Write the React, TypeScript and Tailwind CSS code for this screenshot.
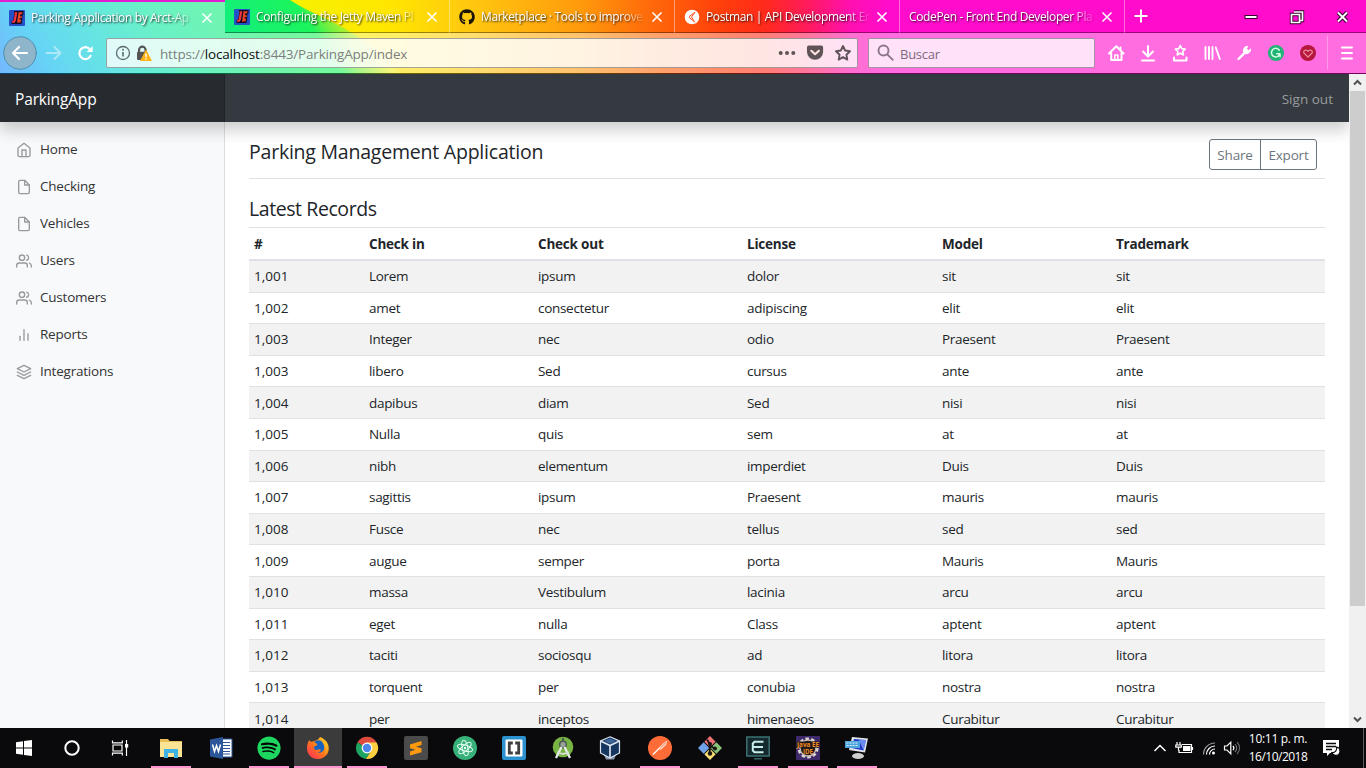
import type { ReactNode } from "react";
import { FiHome, FiFile, FiUsers, FiBarChart2, FiLayers } from "react-icons/fi";
import { FaGithub, FaSpotify } from "react-icons/fa";
import type { IconType } from "react-icons";

const NAV: [string, IconType][] = [
  ["Home", FiHome],
  ["Checking", FiFile],
  ["Vehicles", FiFile],
  ["Users", FiUsers],
  ["Customers", FiUsers],
  ["Reports", FiBarChart2],
  ["Integrations", FiLayers],
];

const HEAD = ["#", "Check in", "Check out", "License", "Model", "Trademark"];

const RECORDS: string[][] = [
  ["1,001", "Lorem", "ipsum", "dolor", "sit", "sit"],
  ["1,002", "amet", "consectetur", "adipiscing", "elit", "elit"],
  ["1,003", "Integer", "nec", "odio", "Praesent", "Praesent"],
  ["1,003", "libero", "Sed", "cursus", "ante", "ante"],
  ["1,004", "dapibus", "diam", "Sed", "nisi", "nisi"],
  ["1,005", "Nulla", "quis", "sem", "at", "at"],
  ["1,006", "nibh", "elementum", "imperdiet", "Duis", "Duis"],
  ["1,007", "sagittis", "ipsum", "Praesent", "mauris", "mauris"],
  ["1,008", "Fusce", "nec", "tellus", "sed", "sed"],
  ["1,009", "augue", "semper", "porta", "Mauris", "Mauris"],
  ["1,010", "massa", "Vestibulum", "lacinia", "arcu", "arcu"],
  ["1,011", "eget", "nulla", "Class", "aptent", "aptent"],
  ["1,012", "taciti", "sociosqu", "ad", "litora", "litora"],
  ["1,013", "torquent", "per", "conubia", "nostra", "nostra"],
  ["1,014", "per", "inceptos", "himenaeos", "Curabitur", "Curabitur"],
];

/* ---------- Tab strip ---------- */

function JettyIcon() {
  return (
    <svg width="16" height="16" viewBox="0 0 16 16">
      <rect width="16" height="16" rx="1" fill="#2450c8" />
      <path d="M5 1h9.500v3.500l-1 .5-.3 5-.7 4H2.500v-3l1.500-.5 1-5z" fill="#160c22" />
      <path d="M5.500 2.300h2.800L6.900 10.500 5.800 12.700H3l.3-2h1.200L5.700 4.500z" fill="#f5333f" />
      <path d="M9.600 2.300h3.900l-.3 2h-1.900l-.3 1.900h1.900l-.3 1.900h-1.900l-.2 1.500h1.600l-.6 2.900H8z" fill="#f04426" />
    </svg>
  );
}

function PostmanTabIcon() {
  return (
    <svg width="16" height="16" viewBox="0 0 16 16">
      <circle cx="8" cy="8" r="7.300" fill="#fff" />
      <path d="M11 3.200 4.800 7.800M5 8.300l5.500 4.500M11 3.200 7.500 8l3 4.800" fill="none" stroke="#ff4a1c" strokeWidth="1" />
    </svg>
  );
}

function Close() {
  return (
    <svg width="12" height="12" viewBox="0 0 12 12" className="shrink-0">
      <path d="M1.500 1.500l9 9M10.500 1.500l-9 9" stroke="#fff" strokeWidth="1.600" />
    </svg>
  );
}

function Tab({ title, icon, active }: { title: string; icon?: ReactNode; active?: boolean }) {
  return (
    <div
      className={
        "flex h-[33px] w-[225px] shrink-0 items-center pl-[9px] " +
        (active
          ? "border-t-2 border-[#e31bd3] bg-white/40 bg-clip-padding pr-[12px]"
          : "border-r border-b border-r-white/40 border-b-black/40 pt-[2px] pr-[11px]")
      }
    >
      {icon && <span className="mr-[6px] flex w-4 shrink-0">{icon}</span>}
      <span className="mr-[5px] flex-1 overflow-hidden text-[12px] leading-[20px] font-medium tracking-[-0.36px] whitespace-nowrap text-white [mask-image:linear-gradient(90deg,#000_calc(100%-24px),transparent)] [text-shadow:1px_1px_2px_rgba(0,0,0,0.85)]">
        {title}
      </span>
      <Close />
    </div>
  );
}

function WindowButtons() {
  return (
    <svg width="116" height="24" viewBox="0 0 116 24" className="mt-[5px] mr-[9px] ml-auto">
      <rect x="4" y="10.500" width="12" height="3" fill="#fff" stroke="#3b0030" strokeWidth="1" />
      <path d="M53 7h8.500v8.500h-2.500M50.500 9.500h8v8h-8z" fill="none" stroke="#3b0030" strokeWidth="3.400" />
      <path d="M53 7h8.500v8.500h-2.500M50.500 9.500h8v8h-8z" fill="none" stroke="#fff" strokeWidth="1.700" />
      <path d="M97 7.500l9 9M106 7.500l-9 9" stroke="#3b0030" strokeWidth="4" />
      <path d="M97 7.500l9 9M106 7.500l-9 9" stroke="#fff" strokeWidth="2" />
    </svg>
  );
}

/* ---------- Toolbar ---------- */

function NavButtons() {
  return (
    <svg width="106" height="40" viewBox="0 0 106 40" className="shrink-0" fill="none" stroke="#fff" strokeLinecap="round" strokeLinejoin="round">
      <circle cx="20" cy="20" r="16.300" fill="#8fb5cb" stroke="#4f8fab" strokeWidth="1" />
      <path d="M27 20H13.500M19 14l-6 6 6 6" strokeWidth="2.200" />
      <path d="M46.500 20H60M54.500 14l6 6-6 6" strokeWidth="2" opacity=".45" />
      <path d="M91 22.200A6 6 0 1 1 90 16.200" strokeWidth="2.200" strokeLinecap="butt" />
      <path d="M92.700 13v6h-6z" fill="#fff" stroke="none" />
    </svg>
  );
}

function SiteIdentity() {
  return (
    <svg width="46" height="20" viewBox="0 0 46 20" className="shrink-0">
      <circle cx="9" cy="10" r="6.500" fill="none" stroke="#5d6a70" strokeWidth="1.300" />
      <path d="M9 9v4.500" stroke="#5d6a70" strokeWidth="1.600" />
      <circle cx="9" cy="6.700" r="1" fill="#5d6a70" />
      <path d="M25 9V7a3.300 3.300 0 0 1 6.600 0v2" fill="none" stroke="#555" strokeWidth="2.200" />
      <rect x="23" y="8.700" width="10.500" height="8.300" rx="1.200" fill="#555" />
      <path d="M32 7.500l5.300 10H26.700z" fill="#ffb214" stroke="#ffb214" strokeWidth="1" strokeLinejoin="round" />
      <path d="M32 10.500v3.700M32 15.200v1.500" stroke="#fff" strokeWidth="1.400" />
    </svg>
  );
}

function PageActions() {
  return (
    <svg width="79" height="24" viewBox="0 0 79 24" className="ml-auto shrink-0" fill="#5f5358">
      <circle cx="2.700" cy="12" r="2" />
      <circle cx="9" cy="12" r="2" />
      <circle cx="15.300" cy="12" r="2" />
      <path d="M30.800 4.500h12.500a1.800 1.800 0 0 1 1.800 1.800v4.500a8.050 8.050 0 0 1-16.100 0V6.300A1.800 1.800 0 0 1 30.800 4.500z" />
      <path d="M33.300 9.700l3.800 3.600 3.800-3.600" fill="none" stroke="#fde5e2" strokeWidth="2" strokeLinecap="round" strokeLinejoin="round" />
      <path d="M65 5l2.100 4.500 4.900.7-3.600 3.500.9 4.900-4.300-2.400-4.300 2.400.9-4.900-3.600-3.500 4.900-.7z" fill="none" stroke="#5f5358" strokeWidth="1.900" strokeLinejoin="round" />
    </svg>
  );
}

function ToolIcons() {
  return (
    <svg width="271" height="40" viewBox="0 0 271 40" className="shrink-0" fill="none" stroke="#fff" strokeWidth="2" strokeLinecap="round" strokeLinejoin="round">
      <path d="M14 20.500 21.300 13.300 28.500 20.500M16.200 20v7h10.300v-7M25.500 14.500v2" />
      <path d="M19.800 27v-5h3v5" strokeWidth="1.500" />
      <path d="M53 13v10M48 18.500l5 5 5-5M47 27.400h12" />
      <path d="M85.300 12.500l1.500 3.200 3.400.4-2.500 2.400.7 3.400-3.100-1.700-3.100 1.700.7-3.400-2.500-2.400 3.400-.4z" strokeWidth="1.700" />
      <path d="M79 24.500v2.900h12.500v-2.900" />
      <path d="M110.500 14v12M114 14v12M117.500 14v12M120.800 14.500l4 11.500" strokeWidth="1.900" />
      <path d="M143.500 26l7.200-7.200" strokeWidth="2.400" />
      <path d="M155.700 16.300a4.200 4.200 0 0 1-6 4l-1-1a4.200 4.200 0 0 1 4-6l-1.200 2.500 1.800 1.700z" fill="#fff" strokeWidth="1" />
      <circle cx="181" cy="20" r="8" fill="#1fb574" stroke="none" />
      <path d="M184.300 17.200a4.300 4.300 0 1 0 .6 3.600h-3.200M185 21v2.700" stroke="#d8fbe9" strokeWidth="1.500" />
      <circle cx="213" cy="20" r="8" fill="#b5173d" stroke="none" />
      <path d="M213 24l-3.800-3.700c-1.800-2 1.300-4.800 3.800-2 2.500-2.800 5.600 0 3.800 2z" stroke="#ef8a9d" strokeWidth="1.200" />
      <path d="M232.500 3v33" stroke="#ff9bea" strokeWidth="1" />
      <path d="M247 14.500h10M247 20h10M247 25.500h10" strokeWidth="2" />
    </svg>
  );
}

function Browser() {
  return (
    <header className="relative flex h-[74px] shrink-0 flex-col bg-[linear-gradient(90deg,#f8f000_300px,#ffe600_390px,#ffc80f_470px,#ff9a0c_580px,#ff6a0a_650px,#ff3d0c_725px,#ff2a1c_765px,#ff1a60_810px,#ff10b0_850px,#ff0ccd_890px)]">
      <svg width="460" height="74" viewBox="0 0 460 74" className="absolute top-0 left-0">
        <defs>
          <linearGradient id="cool" gradientUnits="userSpaceOnUse" x1="0" y1="74" x2="400" y2="-194">
            <stop offset="0" stopColor="#1888ff" />
            <stop offset=".1" stopColor="#00b8ee" />
            <stop offset=".2" stopColor="#00d2d2" />
            <stop offset=".32" stopColor="#06e8a2" />
            <stop offset=".45" stopColor="#12ee7c" />
            <stop offset=".59" stopColor="#1cf45c" />
            <stop offset=".62" stopColor="#70f040" />
            <stop offset=".68" stopColor="#f4ee20" />
          </linearGradient>
        </defs>
        <path d="M0 0H290C308 12 332 20 352 33C371 43 384 55 400 74H0z" fill="url(#cool)" />
      </svg>
      <div className="relative flex h-[33px] text-white">
        <Tab title="Parking Application by Arct-Ap" icon={<JettyIcon />} active />
        <Tab title="Configuring the Jetty Maven Pl" icon={<JettyIcon />} />
        <Tab title="Marketplace · Tools to improve" icon={<FaGithub size={16} color="#1b1508" />} />
        <Tab title="Postman | API Development En" icon={<PostmanTabIcon />} />
        <Tab title="CodePen - Front End Developer Pla" />
        <div className="flex flex-1 border-b border-black/40">
          <svg width="16" height="16" viewBox="0 0 16 16" className="mt-[8px] ml-[8px]">
            <path d="M8 1.500v13M1.500 8h13" stroke="#fff" strokeWidth="2" />
          </svg>
          <WindowButtons />
        </div>
      </div>
      <div className="relative flex h-[40px] items-center bg-white/40">
        <NavButtons />
        <div className="flex h-[30px] w-[752px] shrink-0 items-center rounded-[2px] border border-black/35 bg-white/80 pl-[7px]">
          <SiteIdentity />
          <span className="mt-[2px] text-[13.5px] tracking-[-0.17px] text-[#7c7f7c]">
            https://<span className="text-[#0c0c0d]">localhost</span>:8443/ParkingApp/index
          </span>
          <PageActions />
        </div>
        <div className="ml-[10px] flex h-[30px] w-[227px] shrink-0 items-center rounded-[2px] border border-black/35 bg-white/80 pl-[8px]">
          <svg width="18" height="18" viewBox="0 0 18 18" fill="none" stroke="#8a7688" strokeWidth="1.900">
            <circle cx="6.500" cy="6.500" r="5" />
            <path d="M10.300 10.300l6 6" />
          </svg>
          <span className="mt-[3px] ml-[5px] text-[13px] tracking-[-0.25px] text-[#7d6a7b]">Buscar</span>
        </div>
        <ToolIcons />
      </div>
      <div className="relative h-px bg-black/55" />
    </header>
  );
}

/* ---------- Web page ---------- */

function Sidebar() {
  return (
    <aside className="w-[225px] shrink-0 border-r border-[#dcdde0] bg-[#f8f9fb] pt-[8px]">
      <nav>
        {NAV.map(([name, Icon]) => (
          <a key={name} className="flex h-[37px] items-center pl-[16px] text-[13.5px] leading-[21px] tracking-[-0.22px] text-[#333]">
            <Icon size={16} strokeWidth={2} className="mt-[2px] mr-[8px] text-[#999]" />
            <span className="mt-[2px]">{name}</span>
          </a>
        ))}
      </nav>
    </aside>
  );
}

function Cells({ row }: { row: string[] }) {
  return (
    <>
      {row.map((c, i) => (
        <span key={i} className={i === 0 ? "pl-[5px] tracking-normal" : "pl-[5px]"}>
          {c}
        </span>
      ))}
    </>
  );
}

function Main() {
  return (
    <main className="flex-1 overflow-hidden pr-[24px] pl-[24px] text-[#212529]">
      <div className="flex h-[57px] items-start justify-between border-b border-[#dee2e6] pt-[17px] pr-[8px]">
        <h1 className="mt-[1px] text-[19.5px] leading-[24px] tracking-[-0.22px]">Parking Management Application</h1>
        <div className="flex h-[31px] rounded-[3px] border border-[#6c757d] text-[13.5px] leading-[21px] tracking-[-0.2px] text-[#6c757d]">
          <span className="w-[51px] border-r border-[#6c757d] pt-[5px] text-center">Share</span>
          <span className="w-[55px] pt-[5px] text-center">Export</span>
        </div>
      </div>
      <h2 className="mt-[17px] h-[31px] pt-[1px] text-[19.5px] leading-[24px] tracking-[-0.42px]">Latest Records</h2>
      <div className="border-t border-[#dee2e6] text-[13.5px] leading-[21px] tracking-[-0.3px]">
        <div className="grid h-[33px] grid-cols-[115px_169px_209px_195px_174px_1fr] items-center border-b-2 border-[#dee2e6] pt-[1px] font-bold tracking-[-0.2px]">
          <Cells row={HEAD} />
        </div>
        {RECORDS.map((r, i) => (
          <div
            key={i}
            className="grid h-[31.6px] grid-cols-[115px_169px_209px_195px_174px_1fr] items-center border-b border-[#dee2e6] pt-[0.8px] odd:bg-white even:bg-[#f2f2f2]"
          >
            <Cells row={r} />
          </div>
        ))}
      </div>
    </main>
  );
}

function Scrollbar() {
  return (
    <div className="flex w-[17px] shrink-0 flex-col items-center bg-[#f0f0f0]">
      <svg width="17" height="17" viewBox="0 0 17 17">
        <path d="M5 10.500l3.500-3.500 3.500 3.500" fill="none" stroke="#505050" strokeWidth="2" />
      </svg>
      <div className="h-[515px] w-[15px] bg-[#cdcdcd]" />
      <svg width="17" height="17" viewBox="0 0 17 17" className="mt-auto">
        <path d="M5 6.500l3.500 3.500 3.500-3.500" fill="none" stroke="#505050" strokeWidth="2" />
      </svg>
    </div>
  );
}

function Page() {
  return (
    <div className="flex h-[654px] bg-white">
      <div className="flex flex-1 flex-col overflow-hidden">
        <div className="relative z-10 flex h-[48px] shrink-0 items-center bg-[#343a40] shadow-[0_8px_16px_rgba(0,0,0,0.2)]">
          <div className="flex h-full w-[225px] items-center border-r border-[#202428] bg-[#272b30] pl-[15px] text-[15.5px] tracking-[-0.15px] text-white">
            <span className="mt-[3px]">ParkingApp</span>
          </div>
          <span className="mt-[2px] mr-[16px] ml-auto text-[13.5px] tracking-[0.02px] text-[#999c9f]">Sign out</span>
        </div>
        <div className="flex min-h-0 flex-1">
          <Sidebar />
          <Main />
        </div>
      </div>
      <Scrollbar />
    </div>
  );
}

/* ---------- Taskbar ---------- */

const I = ({ children }: { children: ReactNode }) => (
  <svg width="24" height="24" viewBox="0 0 24 24">
    {children}
  </svg>
);

const windows = (
  <I>
    <path d="M4 6.200l7-1v6.300H4zM12 5.100l8-1.100v7.500h-8zM4 12.500h7v6.300l-7-1zM12 12.500h8V20l-8-1.100z" fill="#fff" />
  </I>
);
const cortana = (
  <I>
    <circle cx="12" cy="12" r="6.700" fill="none" stroke="#fff" strokeWidth="2" />
  </I>
);
const taskView = (
  <I>
    <path d="M4.500 4.500v2.300h9.800V4.500M4.500 19.500v-2.300h9.800v2.300M5 9h9v6H5zM18.500 4v16" fill="none" stroke="#fff" strokeWidth="1.200" />
    <rect x="17" y="8" width="3.200" height="3.500" fill="#fff" />
  </I>
);
const explorer = (
  <I>
    <path d="M1 3h8l1.500 2H23v16H1z" fill="#e9bd57" />
    <path d="M1 6h22v15H1z" fill="#fde394" />
    <path d="M5 22v-9h14v9h-4v-5H9v5z" fill="#3fb2e5" />
  </I>
);
const word = (
  <I>
    <path d="M12 3h11v18H12z" fill="#fff" stroke="#2b579a" />
    <path d="M14 6.500h7M14 9.500h7M14 12.500h7M14 15.500h7M14 18h7" stroke="#2b579a" strokeWidth="1.200" />
    <path d="M1 3.500 14 1v22L1 20.500z" fill="#2b579a" />
    <path d="M3.500 8.500l2 7 2-6 2 6 2-7" fill="none" stroke="#fff" strokeWidth="1.500" />
  </I>
);
const firefox = (
  <I>
    <defs>
      <linearGradient id="ff" x1="0" y1="1" x2="1" y2="0">
        <stop offset="0" stopColor="#ff2b5e" />
        <stop offset=".5" stopColor="#ff7a18" />
        <stop offset="1" stopColor="#ffe32e" />
      </linearGradient>
    </defs>
    <path d="M14 1c3.500 1.500 7.500 4 8.500 9 1.500 7.500-4 13-10.500 13S1 18.500 1 12c0-4 1-6 2.500-8L5 6C8 4.500 12 5 14 1z" fill="url(#ff)" />
    <circle cx="12.500" cy="10.500" r="6.300" fill="#1562c0" />
    <path d="M4 6.500c3-1 6.500 0 7.500 2.500l-3 1.500c-1.500 2 1 4.500 4 3 1.500-.7 3 .3 2 1.500-1.500 2-4 2.500-6 1.500 3.500 3.500 9.500 1.500 10-3.500.3-3-1.500-6.500-4-9 3 1.500 7 4.500 7.500 8.500-1 7-7 9.500-11 9C5 21 1.500 15 4 6.500z" fill="url(#ff)" />
  </I>
);
const chrome = (
  <I>
    <path d="M12 12 2.400 6.500a11 11 0 0 1 19.200 0z" fill="#dd4b3e" />
    <path d="M12 12 2.400 6.500a11 11 0 0 0 8.600 16.400L16.500 14z" fill="#1da362" />
    <path d="M12 6.500h9.600A11 11 0 0 1 11 23l5.500-9z" fill="#ffcd40" />
    <circle cx="12" cy="12" r="5.400" fill="#fff" />
    <circle cx="12" cy="12" r="4.200" fill="#4b87ee" />
  </I>
);
const sublime = (
  <I>
    <rect width="24" height="24" rx="2" fill="#4b4b4b" />
    <path d="M6 8.500 17.500 5v4L12 10.700l5.500 1.600v3.900L6 19.500v-4l5.500-1.800L6 12.300z" fill="#ff9a0c" />
  </I>
);
const atom = (
  <I>
    <circle cx="12" cy="12" r="12" fill="#37b07a" />
    <g fill="none" stroke="#e7fff3" strokeWidth="1">
      <ellipse cx="12" cy="12" rx="2.800" ry="7.800" transform="rotate(-12 12 12)" />
      <ellipse cx="12" cy="12" rx="2.800" ry="7.800" transform="rotate(48 12 12)" />
      <ellipse cx="12" cy="12" rx="2.800" ry="7.800" transform="rotate(108 12 12)" />
    </g>
    <circle cx="12" cy="12" r="1.200" fill="#e7fff3" />
  </I>
);
const brackets = (
  <I>
    <rect width="24" height="24" rx="2" fill="#2b92cf" />
    <rect x="3.500" y="3.500" width="17" height="17" rx="1" fill="#fff" />
    <path d="M10.800 7H7.300v10h3.500M13.200 7h3.500v10h-3.500" fill="none" stroke="#404040" strokeWidth="2.800" />
  </I>
);
const studio = (
  <I>
    <circle cx="12" cy="11" r="10.300" fill="#78b443" />
    <circle cx="12" cy="8.500" r="3.300" fill="#9aa39a" stroke="#4d5b50" strokeWidth="1.500" />
    <path d="M10.500 11 5 22M13.500 11 19 22" stroke="#e8ece8" strokeWidth="2.300" />
    <path d="M6.500 15.500c3.500 3.200 7.500 3.200 11 0" fill="none" stroke="#d8ddd8" strokeWidth="1.700" />
    <path d="M12 2v4" stroke="#4d5b50" strokeWidth="2" />
  </I>
);
const vbox = (
  <I>
    <path d="M6 19h12l-2 4.500H8z" fill="#8796ac" />
    <path d="M12 .800 21.500 5v12L12 22 2.500 17V5z" fill="#17365f" stroke="#dbe5f0" strokeWidth="1.200" />
    <path d="M2.500 5 12 9.500 21.500 5M12 9.500V22" fill="none" stroke="#dbe5f0" strokeWidth="1.700" />
    <path d="M12 2.500 18 5l-6 2.700L6 5z" fill="#3e6698" />
  </I>
);
const postman = (
  <I>
    <circle cx="12" cy="12" r="12" fill="#ff6c37" />
    <path d="M5 18.500 13 10.500" stroke="#fff" strokeWidth="1.300" />
    <path d="M10.500 12.500 15.500 7l4-2.500-1.500 4.500-5.500 5z" fill="#ffe0d2" />
    <path d="M12 12.500 18 6.500" stroke="#e8602f" strokeWidth=".8" />
  </I>
);
const gitBash = (
  <I>
    <g transform="rotate(45 12 12)">
      <rect x="3.500" y="3.500" width="8" height="8" fill="#ec7373" />
      <rect x="3.500" y="12.500" width="8" height="8" fill="#6fa2e6" />
      <rect x="12.500" y="3.500" width="8" height="8" fill="#8ac67a" />
      <rect x="12.500" y="12.500" width="8" height="8" fill="#f7df74" />
    </g>
    <path d="M9 3.500 11.800 8v10M12 9.500l5 3.500" fill="none" stroke="#1b1513" strokeWidth="1.800" />
    <circle cx="12" cy="8" r="2" fill="#1b1513" />
    <circle cx="17" cy="12.500" r="2" fill="#1b1513" />
    <circle cx="12" cy="17.500" r="2.200" fill="#1b1513" />
  </I>
);
const camtasia = (
  <I>
    <rect x=".8" y="1" width="22.400" height="19" fill="#14292d" stroke="#3b7274" strokeWidth="1.500" />
    <path d="M17.500 5.800H8.500l-1.700 1.700v7l1.700 1.700h9M7 11h10" fill="none" stroke="#c9ecea" strokeWidth="2" />
    <path d="M8 22.800h8" stroke="#3b7274" strokeWidth="1.300" />
  </I>
);
const javaEE = (
  <I>
    <rect width="24" height="24" fill="#3e2a6b" />
    <circle cx="12" cy="12" r="9.300" fill="none" stroke="#dcd6cf" strokeWidth="2.600" strokeDasharray="3.600 2.240" />
    <circle cx="12" cy="12" r="8" fill="#211a1a" stroke="#c8c0b8" strokeWidth="1.400" />
    <rect x=".5" y="5.500" width="23" height="6" fill="#211a1a" />
    <text x="1" y="11" fontSize="6.500" fontWeight="700" fill="#f18a24" textLength="22" lengthAdjust="spacingAndGlyphs">
      Java EE
    </text>
    <text x="7" y="18" fontSize="6.500" fontWeight="700" fill="#f18a24" textLength="10" lengthAdjust="spacingAndGlyphs">
      IDE
    </text>
  </I>
);
const remote = (
  <I>
    <ellipse cx="13" cy="20" rx="6" ry="3" fill="#cfcfcf" />
    <path d="M7 1l16 1.500-3 14L4 14z" fill="#e2e6ea" />
    <path d="M9 3l12 1-2.500 10.500L6.500 12z" fill="#2238c8" />
    <path d="M14 4l7 0-2.500 10.500z" fill="#6b8cf0" />
    <rect x="0" y="5" width="15" height="7" fill="#4ba5dc" />
    <path d="M1.500 7h12M1.500 9.500h12" stroke="#d8f0fc" strokeDasharray="2 1" />
  </I>
);

type Task = { icon: ReactNode; w: string; open?: boolean; active?: boolean; label: string };
const TASKS: Task[] = [
  { label: "start", icon: windows, w: "w-[48px]" },
  { label: "cortana", icon: cortana, w: "w-[48px]" },
  { label: "taskview", icon: taskView, w: "w-[48px]" },
  { label: "explorer", icon: explorer, w: "w-[53px]", open: true },
  { label: "word", icon: word, w: "w-[47px]" },
  { label: "spotify", icon: <span className="rounded-full bg-black"><FaSpotify size={24} color="#1ed760" /></span>, w: "w-[49px]", open: true },
  { label: "firefox", icon: firefox, w: "w-[50px]", open: true, active: true },
  { label: "chrome", icon: chrome, w: "w-[48px]", open: true },
  { label: "sublime", icon: sublime, w: "w-[49px]" },
  { label: "atom", icon: atom, w: "w-[49px]" },
  { label: "brackets", icon: brackets, w: "w-[49px]" },
  { label: "studio", icon: studio, w: "w-[49px]" },
  { label: "vbox", icon: vbox, w: "w-[46px]" },
  { label: "postman", icon: postman, w: "w-[54px]", open: true },
  { label: "git", icon: gitBash, w: "w-[45px]" },
  { label: "camtasia", icon: camtasia, w: "w-[51px]", open: true },
  { label: "javaee", icon: javaEE, w: "w-[49px]", open: true },
  { label: "remote", icon: remote, w: "w-[49px]", open: true },
];

function Taskbar() {
  return (
    <footer className="flex h-[40px] bg-[#0a0a0c] text-white">
      {TASKS.map((t) => (
        <div key={t.label} className={"flex shrink-0 justify-center " + t.w}>
          <div
            className={
              "flex items-center justify-center " +
              (t.active ? "w-[48px] bg-[#3b3b3c] " : "w-[40px] ") +
              (t.open ? "border-b-2 border-[#ff95cf] pt-[2px]" : "")
            }
          >
            {t.icon}
          </div>
        </div>
      ))}
      <svg width="96" height="40" viewBox="0 0 96 40" className="ml-auto shrink-0" fill="none" stroke="#fff">
        <path d="M8.500 23l5.500-5.500 5.500 5.500" strokeWidth="1.500" />
        <path d="M36 16.500h9.500v8H33v-2.500" strokeWidth="1.200" />
        <rect x="37" y="18" width="7.500" height="5" fill="#fff" stroke="none" />
        <path d="M46.500 19v3M31 14v3M34 14v3M29.800 17h5.500v2.200h-5.500zM32.500 19v3.500" strokeWidth="1.200" />
        <g strokeWidth="1.200">
          <path d="M57.500 26.500A11.500 11.500 0 0 1 69 15" opacity=".6" />
          <path d="M60.500 26.500A8.500 8.500 0 0 1 69 18" />
          <path d="M63.500 26.500A5.500 5.500 0 0 1 69 21" />
        </g>
        <circle cx="67.500" cy="25" r="1.500" fill="#fff" stroke="none" />
        <path d="M78.500 18h2.500l3.800-3.800v11.600L81 22h-2.500z" strokeWidth="1.200" />
        <path d="M87 18c1 1.200 1 3 0 4.200" strokeWidth="1.200" />
        <path d="M89 16c2.200 2.500 2.200 5.700 0 8.200M91.200 14.200c3 3.500 3 8.200 0 11.700" strokeWidth="1.100" opacity=".45" />
      </svg>
      <div className="flex w-[72px] shrink-0 flex-col items-center pt-[2px] text-[12px] leading-[18px] tracking-[-0.52px]">
        <span className="tracking-[-0.3px]">10:11 p. m.</span>
        <span>16/10/2018</span>
      </div>
      <svg width="34" height="40" viewBox="0 0 34 40" className="ml-[4px] shrink-0">
        <path d="M5 12h16v13H12l-3 3v-3H5z" fill="#fff" />
        <path d="M8 15.500h10M8 18.500h10M8 21.500h6" stroke="#0a0a0c" strokeWidth="1.300" />
        <path d="M18.500 19a4.200 4.200 0 1 1-4.700 5.500 4.200 4.200 0 0 0 4.700-5.500z" fill="#fff" stroke="#0a0a0c" strokeWidth="1.200" />
      </svg>
      <div className="w-[14px] shrink-0 pl-[11px]">
        <div className="h-full w-px bg-[#5a5a5c]" />
      </div>
    </footer>
  );
}

export default function App() {
  return (
    <div className="flex h-[768px] w-[1366px] flex-col overflow-hidden font-['Open_Sans','Noto_Sans',sans-serif]">
      <Browser />
      <Page />
      <Taskbar />
    </div>
  );
}
